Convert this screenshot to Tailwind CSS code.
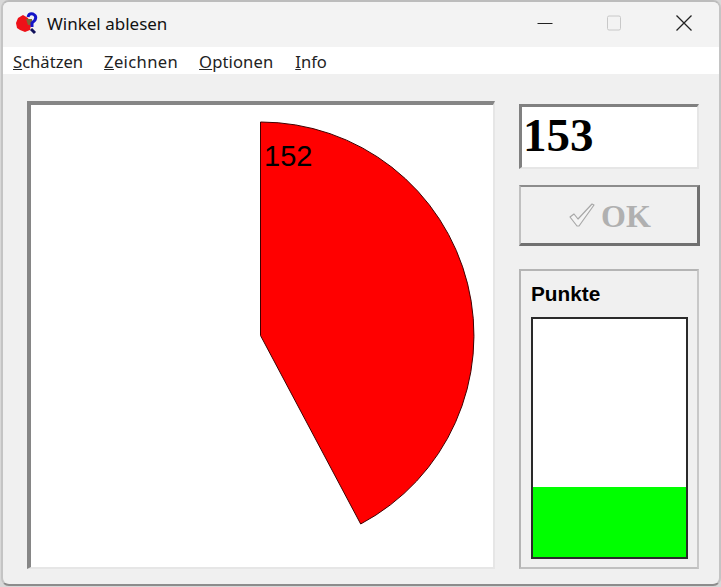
<!DOCTYPE html>
<html lang="de">
<head>
    <meta charset="UTF-8">
    <title>Winkel ablesen</title>
    <script src="https://cdn.jsdelivr.net/npm/@tailwindcss/browser@4"></script>
</head>
<body class="w-[721px] h-[587px] overflow-hidden bg-[#d8d8d8] font-['Liberation_Sans',sans-serif]">
    <div class="w-[720px] h-[586px] ml-[1px] rounded-[8px] border-t-2 border-l-2 border-r-2 border-b-2 border-t-[#bcbcbc] border-l-[#c4c4c4] border-r-[#c4c4c4] border-b-[#8c8c8c] bg-[#f0f0f0] overflow-hidden flex flex-col">
        <!-- Titelleiste -->
        <div class="h-[45px] shrink-0 bg-[#f3f3f3] flex items-center pl-[11px] pb-[3px]">
            <svg class="w-[24px] h-[24px] shrink-0" viewBox="0 0 24 24">
                <path d="M2 12 L4 7 L9 4 L14 7 L17 14 L16 19 L11 21 L6 19 L3 17Z" fill="#ee1118"/>
                <path d="M12 8 L18 8 L18 14 L14 14Z" fill="#7a6a3a"/>
                <path d="M14 6 Q15 2 19 3 Q23 5 21 9 L18 12 L18 16" fill="none" stroke="#1414c8" stroke-width="3"/>
                <path d="M17 18 L21 22" stroke="#10105a" stroke-width="3"/>
            </svg>
            <span class="ml-[9px] text-[17px] leading-none text-[#111] font-['Noto_Sans',sans-serif]">Winkel ablesen</span>
            <div class="ml-auto flex items-center pr-[26px]">
                <svg class="w-[16px] h-[16px]" viewBox="0 0 16 16"><path d="M0.5 8.5H15.5" stroke="#222" stroke-width="1"/></svg>
                <svg class="w-[16px] h-[16px] ml-[53px]" viewBox="0 0 16 16"><rect x="1.5" y="1" width="13" height="14" rx="1.5" fill="none" stroke="#c8c8c8" stroke-width="1"/></svg>
                <svg class="w-[18px] h-[18px] ml-[53px]" viewBox="0 0 18 18"><path d="M1.5 1.5L16.5 16.5M16.5 1.5L1.5 16.5" stroke="#222" stroke-width="1.3"/></svg>
            </div>
        </div>
        <!-- Menue -->
        <div class="h-[27px] shrink-0 bg-white flex items-center pl-[10px] pt-[3px] gap-[21px] text-[16.6px] leading-none text-[#222] font-['Noto_Sans',sans-serif]">
            <span><u>S</u>chätzen</span>
            <span class="tracking-[0.35px]"><u>Z</u>eichnen</span>
            <span class="tracking-[0.1px]"><u>O</u>ptionen</span>
            <span class="ml-[1px]"><u>I</u>nfo</span>
        </div>
        <!-- Inhalt -->
        <div class="flex-1 flex pl-[24px] pt-[27px]">
            <div class="w-[468px] h-[468px] shrink-0 bg-white border-t-[4px] border-l-[4px] border-b-2 border-r-2 border-t-[#868686] border-l-[#868686] border-b-[#e6e6e6] border-r-[#e6e6e6]">
                <svg class="block" width="462" height="462" viewBox="31 105 462 462">
                    <path d="M260.5 122 A213.5 213.5 0 0 1 360.7 524 L260.5 335.5 Z" fill="#ff0000" stroke="#400000" stroke-width="1"/>
                    <text x="264" y="166" font-size="29" fill="#000" font-family="Liberation Sans">152</text>
                </svg>
            </div>
            <div class="ml-[24px] w-[181px] flex flex-col">
                <div class="w-[180px] h-[65px] mt-[3px] bg-white border-t-[3px] border-l-[3px] border-b-2 border-r-2 border-t-[#808080] border-l-[#808080] border-b-[#e6e6e6] border-r-[#e6e6e6] pl-[1px] text-[47px] leading-[56px] font-bold text-black font-['Liberation_Serif',serif]">153</div>
                <div class="w-[181px] h-[61px] mt-[16px] bg-[#f0f0f0] border-t-2 border-l-2 border-b-[3px] border-r-[3px] border-t-[#8c8c8c] border-l-[#c0c0c0] border-b-[#707070] border-r-[#707070] pl-[2px] flex items-center justify-center gap-[6px]">
                    <svg class="w-[26px] h-[24px]" viewBox="0 0 26 24">
                        <path d="M1 14 L5 11 L9 16 L23 1 L25 2 L10 23 L8 23Z" fill="#f4f4f4" stroke="#a8a8a8" stroke-width="1.2" stroke-linejoin="round"/>
                    </svg>
                    <span class="text-[32px] leading-none font-bold text-[#b0b0b0] font-['Liberation_Serif',serif] mt-[2px]">OK</span>
                </div>
                <div class="w-[180px] h-[300px] mt-[23px] border-2 border-[#b4b4b4] border-b-[#c0c0c0] border-r-[#c8c8c8] pl-[10px] flex flex-col">
                    <span class="mt-[11px] h-[35px] text-[20.8px] leading-[24px] font-bold text-black">Punkte</span>
                    <div class="w-[157px] h-[242px] bg-white border-2 border-[#2a2a2a] flex flex-col justify-end">
                        <div class="h-[70px] bg-[#00ff00]"></div>
                    </div>
                </div>
            </div>
        </div>
    </div>
</body>
</html>
